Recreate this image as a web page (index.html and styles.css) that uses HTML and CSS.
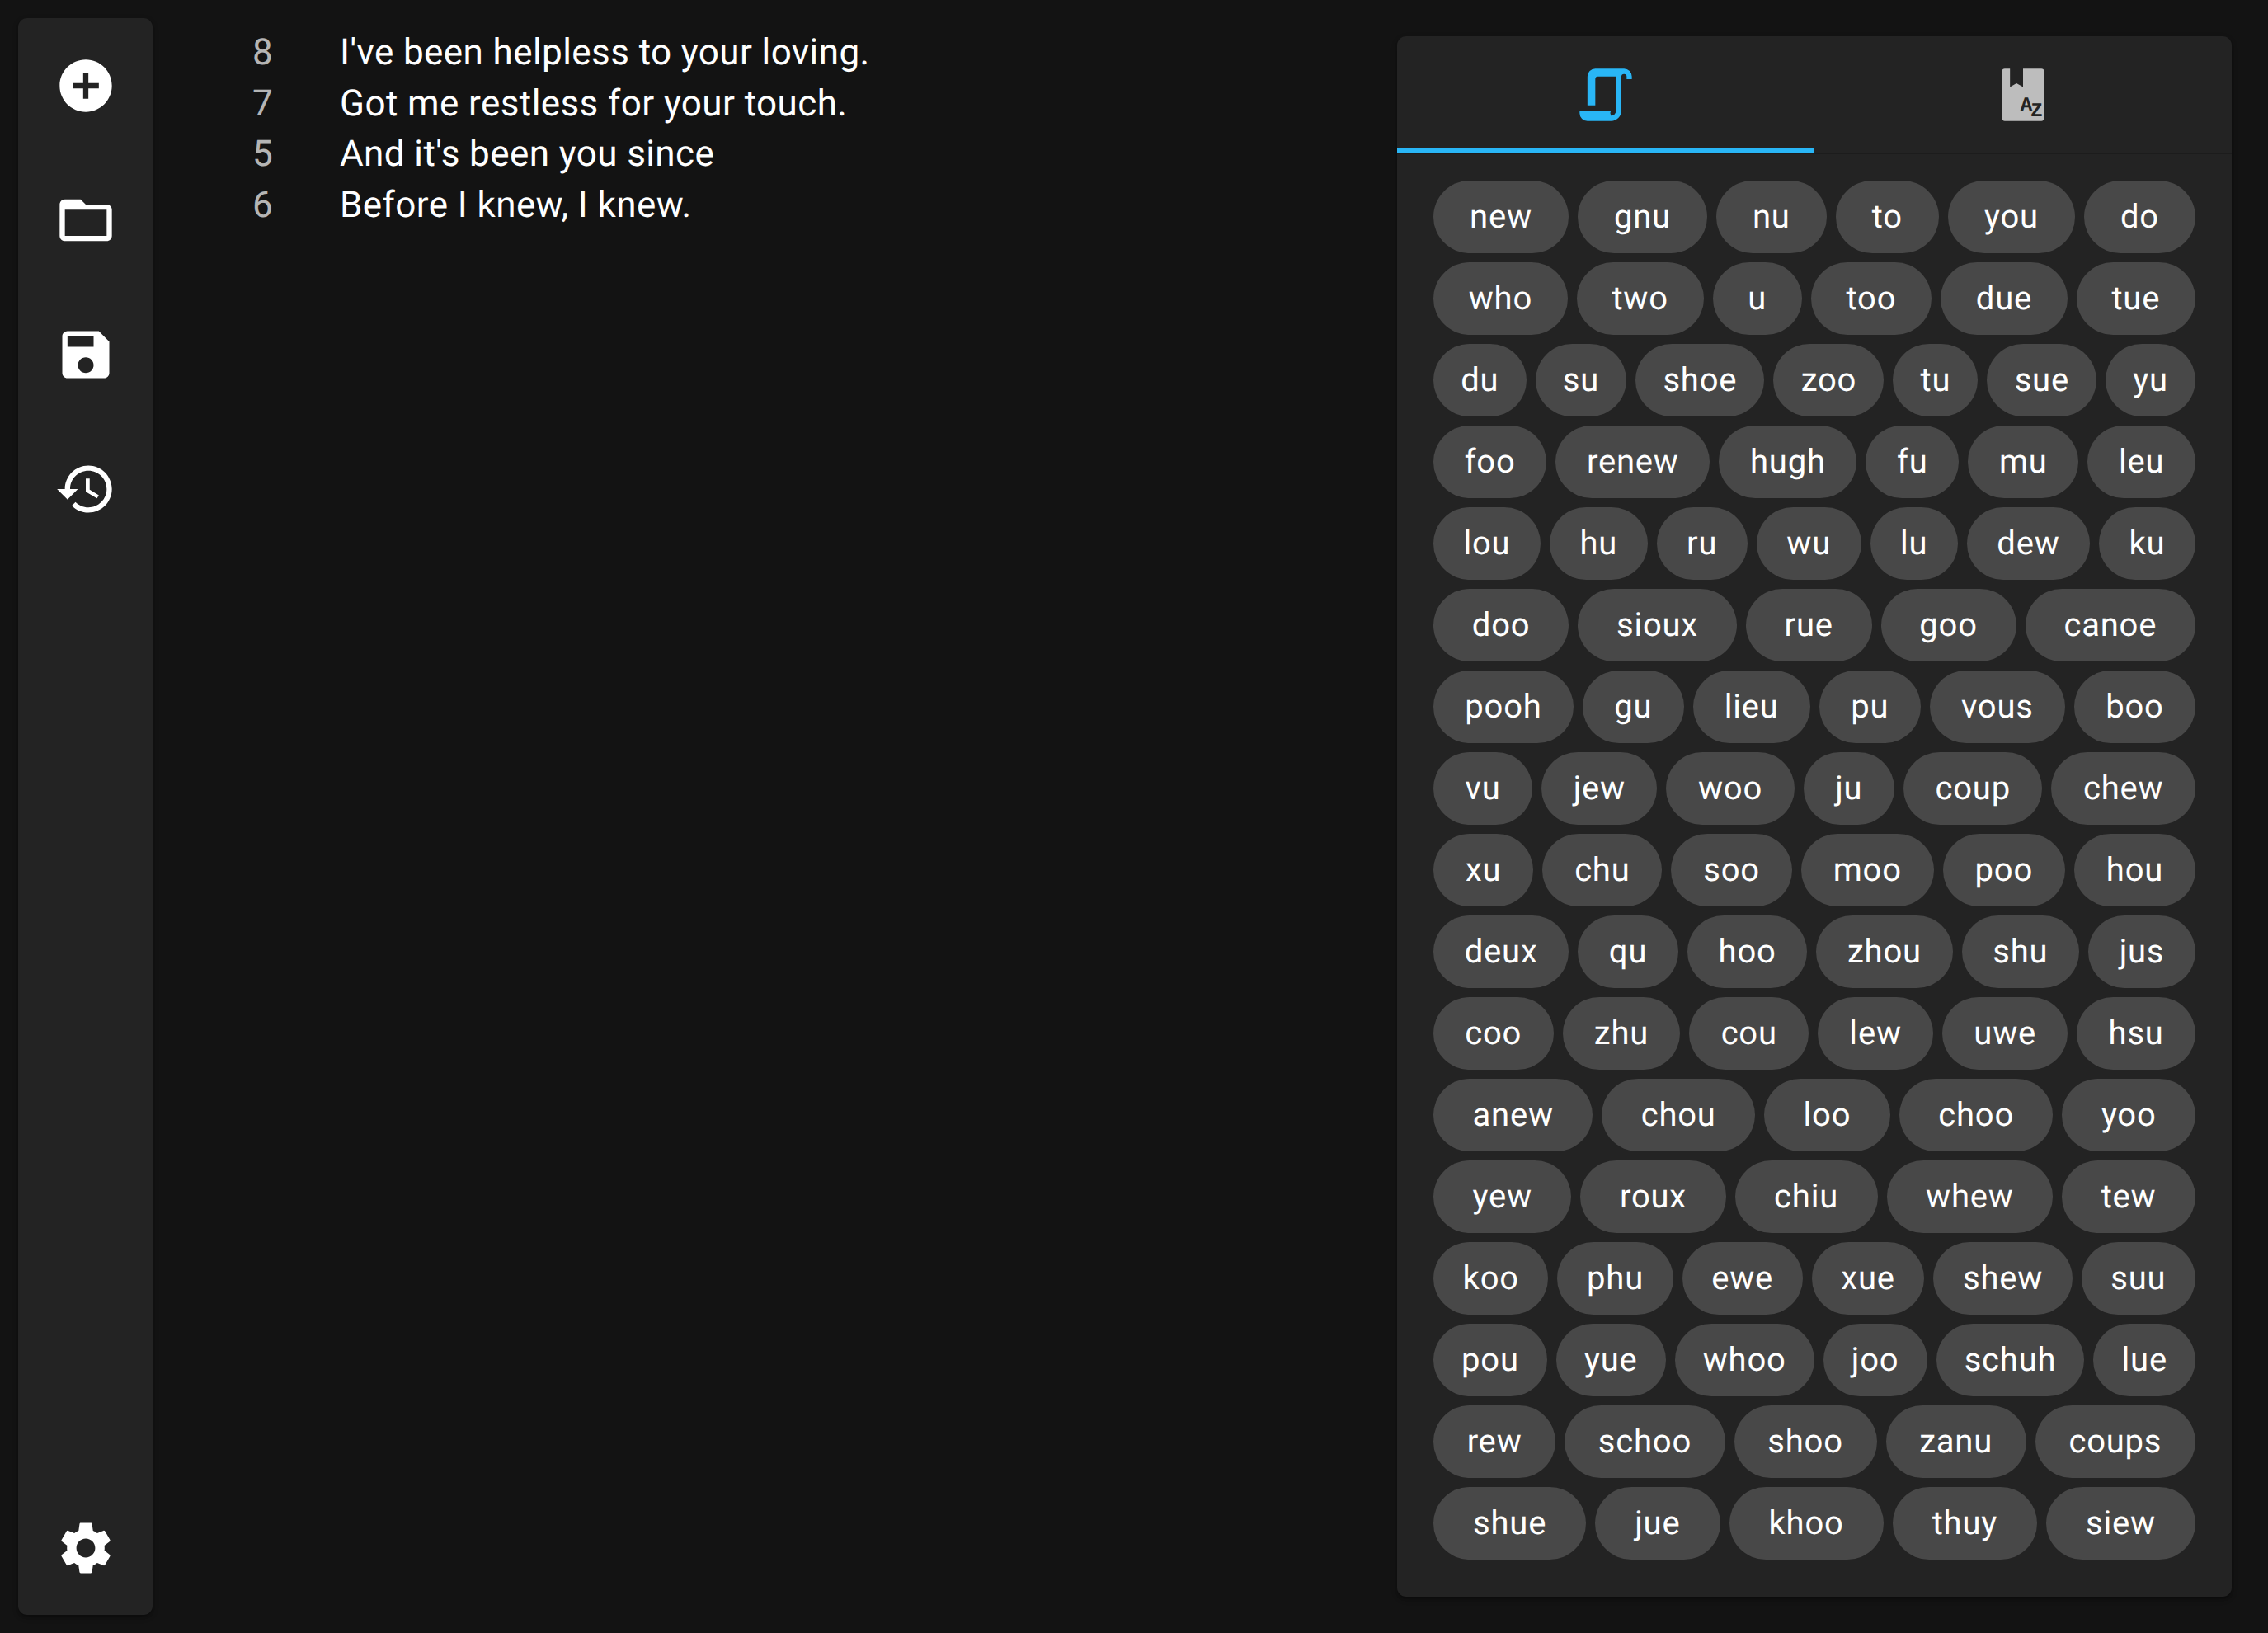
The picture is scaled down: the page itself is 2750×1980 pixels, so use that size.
FILE: index.html
```html
<!DOCTYPE html>
<html lang="en">
<head>
    <meta charset="UTF-8">
    <title>Lyrics Editor</title>
    <link rel="stylesheet" href="styles.css">
</head>
<body>
    <div class="app">
        <!-- Side toolbar -->
        <nav class="sidebar">
            <div class="sidebar-group">
                <button class="side-btn" aria-label="New">
                    <svg class="icon" viewBox="0 0 24 24"><path d="M12 2C6.48 2 2 6.48 2 12s4.48 10 10 10 10-4.48 10-10S17.52 2 12 2zm5 11h-4v4h-2v-4H7v-2h4V7h2v4h4v2z"/></svg>
                </button>
                <button class="side-btn" aria-label="Open">
                    <svg class="icon" viewBox="0 0 24 24"><path d="M20 6h-8l-2-2H4c-1.1 0-1.99.9-1.99 2L2 18c0 1.1.9 2 2 2h16c1.1 0 2-.9 2-2V8c0-1.1-.9-2-2-2zm0 12H4V8h16v10z"/></svg>
                </button>
                <button class="side-btn" aria-label="Save">
                    <svg class="icon" viewBox="0 0 24 24"><path d="M17 3H5c-1.11 0-2 .9-2 2v14c0 1.1.89 2 2 2h14c1.1 0 2-.9 2-2V7l-4-4zm-5 16c-1.66 0-3-1.34-3-3s1.34-3 3-3 3 1.34 3 3-1.34 3-3 3zm3-10H5V5h10v4z"/></svg>
                </button>
                <button class="side-btn" aria-label="History">
                    <svg class="icon" viewBox="0 0 24 24"><path d="M13 3c-4.97 0-9 4.03-9 9H1l3.89 3.89.07.14L9 12H6c0-3.87 3.13-7 7-7s7 3.13 7 7-3.13 7-7 7c-1.93 0-3.68-.79-4.94-2.06l-1.42 1.42C8.27 19.99 10.51 21 13 21c4.97 0 9-4.03 9-9s-4.03-9-9-9zm-1 5v5l4.28 2.54.72-1.21-3.5-2.08V8H12z"/></svg>
                </button>
            </div>
            <button class="side-btn" aria-label="Settings">
                <svg class="icon" viewBox="0 0 24 24"><path d="M19.14 12.94c.04-.3.06-.61.06-.94 0-.32-.02-.64-.07-.94l2.03-1.58c.18-.14.23-.41.12-.61l-1.92-3.32c-.12-.22-.37-.29-.59-.22l-2.39.96c-.5-.38-1.03-.7-1.62-.94l-.36-2.54c-.04-.24-.24-.41-.48-.41h-3.84c-.24 0-.43.17-.47.41l-.36 2.54c-.59.24-1.13.57-1.62.94l-2.39-.96c-.22-.08-.47 0-.59.22L2.74 8.87c-.12.21-.08.47.12.61l2.03 1.58c-.05.3-.09.63-.09.94s.02.64.07.94l-2.03 1.58c-.18.14-.23.41-.12.61l1.92 3.32c.12.22.37.29.59.22l2.39-.96c.5.38 1.03.7 1.62.94l.36 2.54c.05.24.24.41.48.41h3.84c.24 0 .44-.17.47-.41l.36-2.54c.59-.24 1.13-.56 1.62-.94l2.39.96c.22.08.47 0 .59-.22l1.92-3.32c.12-.22.07-.47-.12-.61l-2.01-1.58zM12 15.6c-1.98 0-3.6-1.62-3.6-3.6s1.62-3.6 3.6-3.6 3.6 1.62 3.6 3.6-1.62 3.6-3.6 3.6z"/></svg>
            </button>
        </nav>

        <!-- Lyrics with syllable counts -->
        <main class="lyrics">
            <div class="lyric-line"><span class="count">8</span><span class="words">I've been helpless to your loving.</span></div>
            <div class="lyric-line"><span class="count">7</span><span class="words">Got me restless for your touch.</span></div>
            <div class="lyric-line"><span class="count">5</span><span class="words">And it's been you since</span></div>
            <div class="lyric-line"><span class="count">6</span><span class="words">Before I knew, I knew.</span></div>
        </main>

        <!-- Rhymes panel -->
        <aside class="panel">
            <div class="tabs">
                <div class="tab tab-active">
                    <svg class="icon" viewBox="0 0 24 24"><path d="M14,20A2,2 0 0,0 16,18V5H9A1,1 0 0,0 8,6V16H5V5A3,3 0 0,1 8,2H19A3,3 0 0,1 22,5V6H20V5A1,1 0 0,0 19,4A1,1 0 0,0 18,5V18A4,4 0 0,1 14,22H5A3,3 0 0,1 2,19V18H14A2,2 0 0,0 14,20Z"/></svg>
                </div>
                <div class="tab">
                    <svg class="icon" viewBox="0 0 24 24">
                        <path d="M5 2H7V9L9.500 7.600L12 9V2H19A1 1 0 0 1 20 3V21A1 1 0 0 1 19 22H5A1 1 0 0 1 4 21V3A1 1 0 0 1 5 2Z"/>
                        <text class="book-letter" x="11" y="18.100">A</text>
                        <text class="book-letter" x="14.900" y="20.100">Z</text>
                    </svg>
                </div>
            </div>
            <div class="chips">
                <span class="chip">new</span><span class="chip">gnu</span><span class="chip">nu</span><span class="chip">to</span><span class="chip">you</span><span class="chip">do</span>
                <span class="chip">who</span><span class="chip">two</span><span class="chip">u</span><span class="chip">too</span><span class="chip">due</span><span class="chip">tue</span>
                <span class="chip">du</span><span class="chip">su</span><span class="chip">shoe</span><span class="chip">zoo</span><span class="chip">tu</span><span class="chip">sue</span><span class="chip">yu</span>
                <span class="chip">foo</span><span class="chip">renew</span><span class="chip">hugh</span><span class="chip">fu</span><span class="chip">mu</span><span class="chip">leu</span>
                <span class="chip">lou</span><span class="chip">hu</span><span class="chip">ru</span><span class="chip">wu</span><span class="chip">lu</span><span class="chip">dew</span><span class="chip">ku</span>
                <span class="chip">doo</span><span class="chip">sioux</span><span class="chip">rue</span><span class="chip">goo</span><span class="chip">canoe</span>
                <span class="chip">pooh</span><span class="chip">gu</span><span class="chip">lieu</span><span class="chip">pu</span><span class="chip">vous</span><span class="chip">boo</span>
                <span class="chip">vu</span><span class="chip">jew</span><span class="chip">woo</span><span class="chip">ju</span><span class="chip">coup</span><span class="chip">chew</span>
                <span class="chip">xu</span><span class="chip">chu</span><span class="chip">soo</span><span class="chip">moo</span><span class="chip">poo</span><span class="chip">hou</span>
                <span class="chip">deux</span><span class="chip">qu</span><span class="chip">hoo</span><span class="chip">zhou</span><span class="chip">shu</span><span class="chip">jus</span>
                <span class="chip">coo</span><span class="chip">zhu</span><span class="chip">cou</span><span class="chip">lew</span><span class="chip">uwe</span><span class="chip">hsu</span>
                <span class="chip">anew</span><span class="chip">chou</span><span class="chip">loo</span><span class="chip">choo</span><span class="chip">yoo</span>
                <span class="chip">yew</span><span class="chip">roux</span><span class="chip">chiu</span><span class="chip">whew</span><span class="chip">tew</span>
                <span class="chip">koo</span><span class="chip">phu</span><span class="chip">ewe</span><span class="chip">xue</span><span class="chip">shew</span><span class="chip">suu</span>
                <span class="chip">pou</span><span class="chip">yue</span><span class="chip">whoo</span><span class="chip">joo</span><span class="chip">schuh</span><span class="chip">lue</span>
                <span class="chip">rew</span><span class="chip">schoo</span><span class="chip">shoo</span><span class="chip">zanu</span><span class="chip">coups</span>
                <span class="chip">shue</span><span class="chip">jue</span><span class="chip">khoo</span><span class="chip">thuy</span><span class="chip">siew</span>
            </div>
        </aside>
    </div>
</body>
</html>
```

FILE: styles.css
```css
/* Basic styling */
body {
    margin: 0;
    background: #131313;
    color: #fff;
    font-family: 'Roboto', sans-serif;
    text-rendering: geometricPrecision;
}

.app {
    display: flex;
    align-items: flex-start;
    height: 1980px;
    box-sizing: border-box;
}

.icon {
    display: block;
    width: 76px;
    height: 76px;
    fill: currentColor;
}

/* Side toolbar */
.sidebar {
    display: flex;
    flex-direction: column;
    justify-content: space-between;
    align-self: stretch;
    flex: none;
    width: 163px;
    margin: 22px;
    background: #232323;
    border-radius: 11px;
    box-shadow: 0 3px 5px -2px rgba(0,0,0,0.2), 0 3px 3px 0 rgba(0,0,0,0.14), 0 3px 8px 0 rgba(0,0,0,0.12);
}

.side-btn {
    display: flex;
    align-items: center;
    justify-content: center;
    width: 163px;
    height: 163px;
    padding: 0;
    border: none;
    background: none;
    color: #fff;
}

/* Lyrics */
.lyrics {
    flex: 1;
    padding: 33px 0 0 99px;
    font-size: 44px;
    line-height: 61.7px;
    letter-spacing: 0.41px;
}

.lyric-line {
    display: flex;
}

.count {
    width: 106px;
    color: rgba(255,255,255,0.7);
}

/* Rhymes panel */
.panel {
    flex: none;
    width: 1012px;
    margin: 44px 44px 0 0;
    padding-bottom: 45px;
    background: #232323;
    border-radius: 11px;
    box-shadow: 0 3px 5px -2px rgba(0,0,0,0.2), 0 3px 3px 0 rgba(0,0,0,0.14), 0 3px 8px 0 rgba(0,0,0,0.12);
}

.tabs {
    display: flex;
    height: 142px;
    border-bottom: 1px solid #1c1c1c;
}

.tab {
    flex: 1;
    display: flex;
    align-items: center;
    justify-content: center;
    color: rgba(255,255,255,0.7);
}

.tab-active {
    color: #29b6f6;
    box-shadow: inset 0 -6px 0 #29b6f6;
}

.book-letter {
    font-family: 'Liberation Mono', monospace;
    font-size: 7.6px;
    font-weight: bold;
    fill: #232323;
}

.chips {
    display: flex;
    flex-wrap: wrap;
    gap: 11px;
    padding: 32px 44px 0;
}

.chip {
    flex-grow: 1;
    height: 88px;
    padding: 0 33px;
    border-radius: 44px;
    background: #484848;
    font-size: 40px;
    letter-spacing: 0.8px;
    line-height: 88px;
    text-align: center;
}
```
